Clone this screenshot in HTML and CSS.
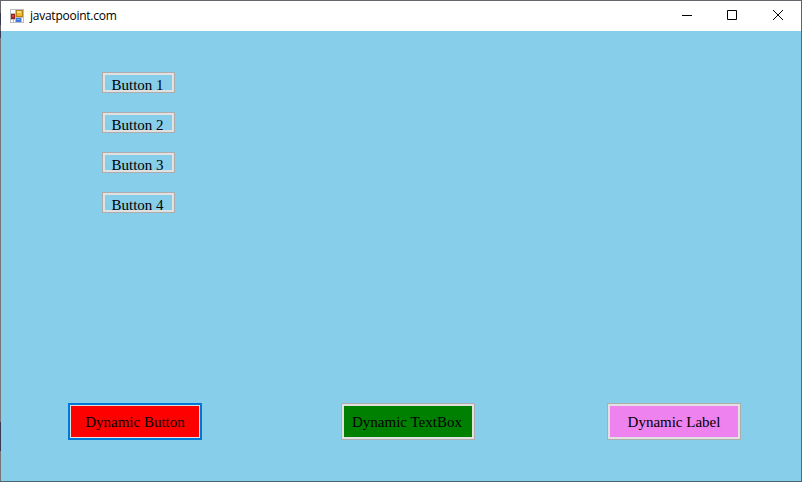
FILE: index.html
```
<!DOCTYPE html>
<html lang="en">
<head>
<meta charset="utf-8">
<title>javatpooint.com</title>
<link rel="stylesheet" href="styles.css">
</head>
<body>
<div class="window">
  <header class="titlebar">
    <svg class="app-icon" width="14" height="14" viewBox="0 0 14 14" shape-rendering="crispEdges">
      <path fill="#bdbdbd" d="M0 0h14v14H0z"/>
      <path fill="#fff" d="M1 1h4v3H1zM1 11h2v2H1zM4 11h1v2H4zM12 9h1v4h-1z"/>
      <path fill="#9b2020" d="M1 5h4v5H1z"/>
      <path fill="#d4453c" d="M2 6h2v2H2z"/>
      <path fill="#b98212" d="M6 1h7v7H6z"/>
      <path fill="#f3b92c" d="M7 2h5v5H7z"/>
      <path fill="#ffe08a" d="M7 2h4v2H7z"/>
      <path fill="#3e79dc" d="M6 9h5v4H6z"/>
      <path fill="#79adf5" d="M7 10h3v1H7z"/>
    </svg>
    <h1 class="title">javatpooint.com</h1>
    <div class="controls">
      <svg width="45" height="30" viewBox="0 0 45 30"><path d="M17 14.5h10"/></svg>
      <svg width="45" height="30" viewBox="0 0 45 30"><path d="M17.5 9.5h9v9h-9z"/></svg>
      <svg width="45" height="30" viewBox="0 0 45 30"><path d="M18 9l10 10M28 9L18 19"/></svg>
    </div>
  </header>
  <main class="form">
    <div class="list">
      <button class="btn small"><span>Button 1</span></button>
      <button class="btn small"><span>Button 2</span></button>
      <button class="btn small"><span>Button 3</span></button>
      <button class="btn small"><span>Button 4</span></button>
    </div>
    <div class="actions">
      <button class="btn large red">Dynamic Button</button>
      <button class="btn large green">Dynamic TextBox</button>
      <button class="btn large violet">Dynamic Label</button>
    </div>
  </main>
</div>
</body>
</html>
```
FILE: styles.css
```
* { box-sizing: border-box; }
body { margin: 0; overflow: hidden; }
.window {
  display: flex;
  flex-direction: column;
  width: 802px;
  height: 482px;
  padding: 1px;
  background:
    linear-gradient(#4c646f, #4c646f) bottom / 100% 1px no-repeat,
    linear-gradient(#59666d, #59666d) right / 1px 100% no-repeat,
    linear-gradient(#66656b 13px, #383a50 13px 25px, #66656b 25px 31px, #383a50 31px 38px, #77747a 38px 422px, #383a50 422px 451px, #77747a 451px);
}
.titlebar {
  display: flex;
  align-items: center;
  height: 30px;
  padding-left: 9px;
  background: #fff;
}
.app-icon { display: block; margin-right: 6px; }
.title {
  margin: 0;
  font: 12px/30px "Open Sans", sans-serif;
  letter-spacing: -0.25px;
  color: #000;
}
.controls { display: flex; margin-left: auto; margin-right: 1px; }
.controls svg { display: block; fill: none; stroke: #000; stroke-width: 1; }
.form {
  flex: 1;
  display: flex;
  flex-direction: column;
  justify-content: space-between;
  padding: 41px 60px 41px 67px;
  background: skyblue;
}
.list { display: flex; flex-direction: column; gap: 19px; padding-left: 34px; }
.actions { display: flex; }
.btn {
  display: block;
  margin: 0;
  padding: 0;
  border: 1px solid #adadad;
  box-shadow: inset 0 0 0 2px #e1e1e1;
  color: #000;
  font: 15px/20px "Liberation Serif", serif;
  text-align: center;
  white-space: nowrap;
}
.small { width: 73px; height: 21px; padding: 2px 3px 2px 1px; background: skyblue; }
.small span { display: block; height: 15px; line-height: 20px; }
.large { width: 134px; height: 37px; padding-top: 1px; }
.red { border: 2px solid #0078d7; box-shadow: inset 0 0 0 1px #e1e1e1; background: red; }
.green { margin-left: 139px; padding-right: 2px; background: green; }
.violet { margin-left: 132px; background: violet; }
```
